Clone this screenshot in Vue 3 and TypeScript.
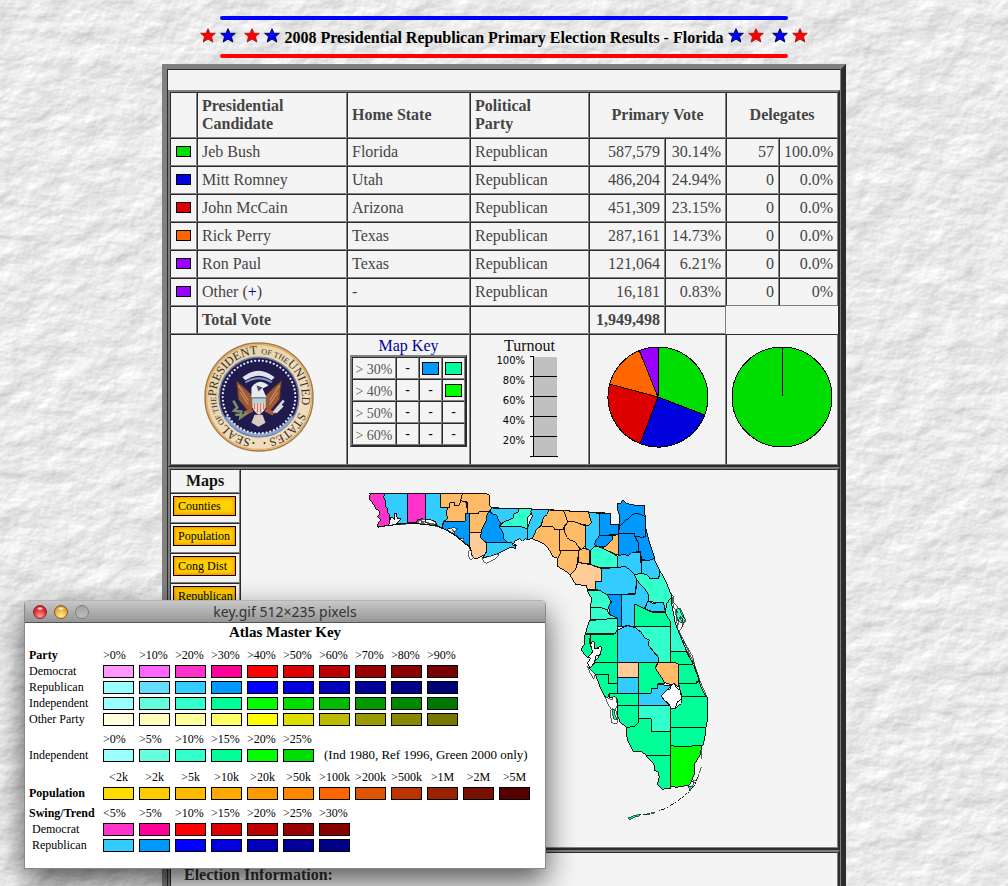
<script setup lang="ts">
interface Candidate {
  name: string
  home: string
  color: string
  votes: string
  pct: string
  delegates: string
  share: string
  more?: boolean
}

interface Region {
  fill: string
  points: string
}

interface KeyRow {
  label: string
  colors: string[]
  note?: string
}

interface KeySection {
  id: string
  title: string
  heads: string[]
  rows: KeyRow[]
}

const candidates: Candidate[] = [
  { name: 'Jeb Bush', home: 'Florida', color: '#00dd00', votes: '587,579', pct: '30.14%', delegates: '57', share: '100.0%' },
  { name: 'Mitt Romney', home: 'Utah', color: '#0000dd', votes: '486,204', pct: '24.94%', delegates: '0', share: '0.0%' },
  { name: 'John McCain', home: 'Arizona', color: '#dd0000', votes: '451,309', pct: '23.15%', delegates: '0', share: '0.0%' },
  { name: 'Rick Perry', home: 'Texas', color: '#ff6600', votes: '287,161', pct: '14.73%', delegates: '0', share: '0.0%' },
  { name: 'Ron Paul', home: 'Texas', color: '#9900ff', votes: '121,064', pct: '6.21%', delegates: '0', share: '0.0%' },
  { name: 'Other', home: '-', color: '#9900ff', votes: '16,181', pct: '0.83%', delegates: '0', share: '0%', more: true },
]

const mapKey: { label: string; cells: string[] }[] = [
  { label: '> 30%', cells: ['', '#0099ff', '#00ff99'] },
  { label: '> 40%', cells: ['', '', '#00ff00'] },
  { label: '> 50%', cells: ['', '', ''] },
  { label: '> 60%', cells: ['', '', ''] },
]

const turnoutMarks = [100, 80, 60, 40, 20]
const mapLinks = ['Counties', 'Population', 'Cong Dist', 'Republican']

const slices = [
  { from: 1, to: 111, color: '#00dd00' },
  { from: 111, to: 201, color: '#0000dd' },
  { from: 201, to: 285, color: '#dd0000' },
  { from: 285, to: 338, color: '#ff6600' },
  { from: 338, to: 361, color: '#9900ff' },
]

function point(angle: number, r: number): string {
  const a = (angle * Math.PI) / 180
  return `${(51 + r * Math.sin(a)).toFixed(2)} ${(51 - r * Math.cos(a)).toFixed(2)}`
}

function slicePath(from: number, to: number): string {
  return `M51 51L${point(from, 50)}A50 50 0 ${to - from > 180 ? 1 : 0} 1 ${point(to, 50)}Z`
}

const beads = Array.from({ length: 60 }, (_, i) => {
  const a = (i * 6 * Math.PI) / 180
  return { x: 54.5 + 36 * Math.sin(a), y: 54.5 - 36 * Math.cos(a) }
})

const pink = '#ff33cc'
const sky = '#33ccff'
const azure = '#0099ff'
const aqua = '#33ffcc'
const mint = '#00ff99'
const amber = '#ffbb66'
const peach = '#ffcc99'

const panhandle: Region[] = [
  { fill: pink, points: '28,48 33,41 75,41 71,51 77,63 75,75 82,86 84,98 89,104 88,130 83,136 68,139 53,142 54,131 62,120 53,111 59,100 56,91 47,86 40,72 28,58' },
  { fill: sky, points: '75,41 142,41 142,130 108,131 118,124 122,116 112,115 108,100 103,102 104,118 92,110 88,130 89,104 84,98 82,86 75,75 77,63 71,51' },
  { fill: pink, points: '142,41 196,41 196,120 185,116 172,122 168,128 142,128' },
  { fill: sky, points: '196,41 241,41 241,82 263,82 260,95 265,118 248,130 248,146 232,138 225,124 214,120 196,120' },
  { fill: amber, points: '241,41 307,41 302,62 298,76 285,78 283,67 270,69 270,82 241,82' },
  { fill: amber, points: '263,82 270,82 270,69 283,67 285,78 298,76 302,62 320,68 322,100 316,100 316,124 250,124 262,118 260,95' },
  { fill: amber, points: '307,41 380,41 388,46 388,75 396,84 388,94 356,96 354,101 322,100 322,66 302,62' },
  { fill: azure, points: '250,124 316,124 316,100 328,100 328,198 318,192 300,176 280,160 265,152 248,146' },
  { fill: amber, points: '328,101 354,101 356,96 388,94 378,108 380,120 370,140 362,157 328,157' },
  { fill: peach, points: '328,157 362,157 367,170 378,186 381,205 376,224 362,230 352,235 341,235 333,218 330,200' },
  { fill: azure, points: '388,94 395,100 410,106 416,122 424,128 418,140 430,160 432,176 442,187 378,187 362,175 364,150 380,120 378,108' },
  { fill: sky, points: '378,187 458,187 458,196 468,195 467,206 456,201 440,207 420,218 400,226 385,230 368,233 380,215' },
  { fill: sky, points: '396,84 476,86 474,96 460,104 460,115 440,122 424,130 416,122 410,106 395,100 390,92' },
  { fill: aqua, points: '476,86 515,86 516,92 510,104 503,114 503,146 480,139 418,139 430,128 440,122 460,115 460,104 474,96' },
  { fill: sky, points: '418,139 480,139 502,146 502,178 495,176 488,184 480,176 465,182 462,190 442,187 432,176 430,160' },
]

const north: Region[] = [
  { fill: sky, points: '35,88 86,90 82,103 70,113 62,138 50,147 37,176 22,178 22,145 32,118 38,108 32,95' },
  { fill: amber, points: '86,89 130,92 136,97 140,112 144,124 132,140 132,148 118,150 103,148 100,140 64,138 70,113 82,103' },
  { fill: amber, points: '64,138 100,140 103,148 118,150 118,210 124,212 116,235 98,230 88,210 76,195 60,186 37,176 50,147' },
  { fill: amber, points: '130,92 206,96 214,128 206,136 190,134 175,130 165,126 148,124 142,124 138,110' },
  { fill: amber, points: '142,128 148,124 165,126 190,136 196,136 196,198 190,204 184,208 172,196 165,186 150,180 140,172 134,155 132,142' },
  { fill: amber, points: '118,150 132,148 134,155 140,172 150,180 165,186 180,208 172,212 118,210' },
  { fill: sky, points: '206,97 238,100 238,168 226,184 228,196 217,212 210,212 196,204 196,136 206,136 214,128' },
  { fill: amber, points: '124,212 176,212 174,230 172,248 166,270 150,286 140,276 112,258 114,235' },
  { fill: amber, points: '176,212 192,204 210,212 210,250 190,250 174,246' },
  { fill: azure, points: '238,100 272,100 272,134 296,134 296,164 238,166' },
  { fill: azure, points: '292,72 302,70 308,60 320,70 345,76 374,78 374,100 376,110 362,103 345,99 328,112 298,140 298,104 292,86' },
  { fill: azure, points: '298,140 328,112 345,99 362,103 376,110 378,150 382,168 366,172 344,168 342,160 296,160' },
  { fill: azure, points: '238,168 280,166 276,180 258,198 238,200 224,196 226,184' },
  { fill: amber, points: '280,166 296,164 296,226 262,212 246,204 258,198 276,180' },
  { fill: aqua, points: '212,210 217,206 226,198 246,204 262,212 292,228 292,272 276,274 274,264 244,264 212,254' },
  { fill: azure, points: '296,160 342,160 344,170 356,190 356,214 335,220 325,228 312,222 296,228' },
  { fill: azure, points: '344,168 366,172 376,170 378,148 386,180 404,235 384,242 364,238 362,218 356,214 354,186' },
  { fill: sky, points: '294,228 312,222 325,228 335,218 362,216 364,280 342,284 328,268 315,262 294,262' },
  { fill: sky, points: '364,240 384,242 402,236 416,265 420,274 416,294 390,296 380,284 366,280' },
  { fill: peach, points: '174,248 190,250 212,254 246,266 246,304 226,306 226,330 202,328 198,316 168,314 150,286 166,270' },
  { fill: sky, points: '246,266 294,262 315,260 328,268 344,284 350,295 346,340 304,344 262,344 240,332 226,326 226,306 246,304' },
  { fill: sky, points: '304,344 346,342 352,296 374,326 386,345 384,362 372,386 344,372 344,440 322,437 304,440' },
  { fill: aqua, points: '344,284 366,280 380,284 390,296 416,296 420,272 440,310 456,350 452,370 440,370 436,400 430,372 400,366 384,362 386,345 374,326 350,300' },
  { fill: aqua, points: '202,332 226,330 240,332 262,344 274,356 268,380 262,390 240,382 212,382 214,354' },
  { fill: aqua, points: '212,382 240,382 262,390 268,404 290,412 290,420 212,420' },
  { fill: azure, points: '262,344 304,344 304,440 292,440 292,414 270,404 266,380 274,366' },
  { fill: mint, points: '344,372 372,386 400,398 436,396 452,415 452,440 344,440' },
  { fill: sky, points: '384,364 400,370 430,366 436,396 400,396 374,386' },
  { fill: aqua, points: '208,422 292,414 292,450 284,462 196,462' },
  { fill: mint, points: '210,464 284,462 292,452 292,547 226,550 215,557 240,525 244,500 225,506 218,520 212,500' },
  { fill: mint, points: '194,464 212,464 208,486 218,514 206,534 194,526 184,508 194,490' },
  { fill: sky, points: '292,450 322,437 344,442 362,456 376,475 388,480 384,494 400,515 414,532 416,547 292,547' },
  { fill: aqua, points: '344,440 452,440 452,547 416,547 414,530 384,494 388,480 376,475 362,456' },
  { fill: aqua, points: '440,370 456,350 456,378 466,430 480,465 500,514 452,514 452,425 436,400' },
  { fill: mint, points: '452,514 500,514 520,552 474,552 452,547' },
]

const south: Region[] = [
  { fill: mint, points: '56,88 76,67 142,67 142,130 115,130 115,103 76,103 64,96' },
  { fill: mint, points: '76,103 115,103 115,130 142,130 142,160 118,160 114,172 104,170 90,140' },
  { fill: peach, points: '142,67 205,67 205,112 142,112' },
  { fill: sky, points: '142,112 205,112 205,160 142,160' },
  { fill: mint, points: '205,67 264,67 256,82 272,105 285,124 285,132 264,132 264,145 244,145 244,160 205,160' },
  { fill: amber, points: '264,67 314,67 326,74 326,140 315,134 305,134 284,128 270,105 256,85' },
  { fill: mint, points: '326,74 370,74 388,122 380,124 380,130 326,130' },
  { fill: mint, points: '326,130 380,130 388,122 392,140 408,169 336,169 330,150' },
  { fill: sky, points: '205,160 244,160 244,145 264,145 264,132 302,138 290,150 274,168 284,184 300,196 205,196' },
  { fill: mint, points: '118,160 205,160 205,196 142,196 142,180 136,170 120,174' },
  { fill: mint, points: '142,196 205,196 205,250 190,262 168,262 150,245 142,225' },
  { fill: aqua, points: '205,196 302,196 302,274 244,274 244,236 205,236' },
  { fill: mint, points: '168,262 192,260 205,250 205,236 244,236 244,274 302,274 302,346 228,346 215,334 190,334 172,300' },
  { fill: mint, points: '302,196 312,208 334,190 336,169 408,169 414,172 414,230 408,262 302,262' },
  { fill: mint, points: '302,262 408,262 404,296 398,318 380,316 352,320 330,320 302,317' },
  { fill: '#00ff00', points: '302,317 330,320 352,320 380,316 396,318 390,345 372,375 374,400 362,428 356,436 318,442 302,438' },
  { fill: mint, points: '228,346 302,346 302,444 276,448 262,434 268,410 264,396 252,390 254,376' },
  { fill: '#ffffff', points: '302,138 312,130 320,144 332,152 334,178 322,186 316,206 304,206 296,190 284,182 274,168 290,150 302,146' },
]

const keySections: KeySection[] = [
  {
    id: 'party',
    title: 'Party',
    heads: ['>0%', '>10%', '>20%', '>30%', '>40%', '>50%', '>60%', '>70%', '>80%', '>90%'],
    rows: [
      { label: 'Democrat', colors: ['#ff99ff', '#ff66ff', '#ff33cc', '#ff0099', '#ff0000', '#dd0000', '#bb0000', '#990000', '#880000', '#770000'] },
      { label: 'Republican', colors: ['#99ffff', '#66ddff', '#33ccff', '#0099ff', '#0000ff', '#0000dd', '#0000bb', '#000099', '#000088', '#000077'] },
      { label: 'Independent', colors: ['#99ffff', '#66ffdd', '#33ffcc', '#00ff99', '#00ff00', '#00dd00', '#00bb00', '#009900', '#008800', '#007700'] },
      { label: 'Other Party', colors: ['#ffffdd', '#ffffbb', '#ffff99', '#ffff66', '#ffff00', '#dddd00', '#bbbb00', '#999900', '#888800', '#777700'] },
    ],
  },
  {
    id: 'minor',
    title: '',
    heads: ['>0%', '>5%', '>10%', '>15%', '>20%', '>25%'],
    rows: [
      { label: 'Independent', colors: ['#99ffff', '#66ffdd', '#33ffcc', '#00ff99', '#00ff00', '#00dd00'], note: '(Ind 1980, Ref 1996, Green 2000 only)' },
    ],
  },
  {
    id: 'population',
    title: '',
    heads: ['<2k', '>2k', '>5k', '>10k', '>20k', '>50k', '>100k', '>200k', '>500k', '>1M', '>2M', '>5M'],
    rows: [
      { label: 'Population', colors: ['#ffdd00', '#ffcc00', '#ffbb00', '#ffaa00', '#ff9900', '#ff8800', '#ff6600', '#dd5500', '#bb3300', '#992200', '#771100', '#550000'] },
    ],
  },
  {
    id: 'swing',
    title: 'Swing/Trend',
    heads: ['<5%', '>5%', '>10%', '>15%', '>20%', '>25%', '>30%'],
    rows: [
      { label: 'Democrat', colors: ['#ff33cc', '#ff0099', '#ff0000', '#dd0000', '#bb0000', '#990000', '#880000'] },
      { label: 'Republican', colors: ['#33ccff', '#0099ff', '#0000ff', '#0000dd', '#0000bb', '#000099', '#000088'] },
    ],
  },
]

const starsLeft = ['red', 'blue', 'red', 'blue']
const starsRight = ['blue', 'red', 'blue', 'red']
</script>

<template>
  <div class="page">
    <svg class="marble" aria-hidden="true">
      <filter id="marble" x="0" y="0" width="100%" height="100%" color-interpolation-filters="sRGB">
        <feTurbulence type="fractalNoise" baseFrequency="0.03 0.04" numOctaves="5" seed="11" />
        <feDiffuseLighting surfaceScale="1" diffuseConstant="1.23" lighting-color="#ffffff">
          <feDistantLight azimuth="235" elevation="48" />
        </feDiffuseLighting>
      </filter>
      <rect width="100%" height="100%" filter="url(#marble)" />
    </svg>

    <main class="content">
      <header class="banner">
        <div class="rule rule-blue"></div>
        <h1>
          <span class="stars">
            <svg v-for="(s, i) in starsLeft" :key="i" class="star" :class="s" viewBox="0 0 16 15">
              <path d="M8 .7L10 5.3H15.3L11.4 8.7L12.8 14L8 11L3.2 14L4.6 8.7L.7 5.3H6Z" />
            </svg>
          </span>
          2008 Presidential Republican Primary Election Results - Florida
          <span class="stars">
            <svg v-for="(s, i) in starsRight" :key="i" class="star" :class="s" viewBox="0 0 16 15">
              <path d="M8 .7L10 5.3H15.3L11.4 8.7L12.8 14L8 11L3.2 14L4.6 8.7L.7 5.3H6Z" />
            </svg>
          </span>
        </h1>
        <div class="rule rule-red"></div>
      </header>

      <div class="frame">
        <div class="frame-inner">
          <table class="results">
            <colgroup>
              <col class="c-swatch" /><col class="c-name" /><col class="c-home" /><col class="c-party" />
              <col class="c-votes" /><col class="c-pct" /><col class="c-del" /><col class="c-share" />
            </colgroup>
            <thead>
              <tr class="head-row">
                <th></th>
                <th>Presidential<br />Candidate</th>
                <th>Home State</th>
                <th>Political<br />Party</th>
                <th colspan="2" class="center">Primary Vote</th>
                <th colspan="2" class="center">Delegates</th>
              </tr>
            </thead>
            <tbody>
              <tr v-for="c in candidates" :key="c.name">
                <td class="chip-cell"><span class="chip" :style="{ background: c.color }"></span></td>
                <td>{{ c.name }}<template v-if="c.more"> (<a href="#other">+</a>)</template></td>
                <td>{{ c.home }}</td>
                <td>Republican</td>
                <td class="num">{{ c.votes }}</td>
                <td class="num">{{ c.pct }}</td>
                <td class="num">{{ c.delegates }}</td>
                <td class="num">{{ c.share }}</td>
              </tr>
              <tr class="total">
                <td></td>
                <td>Total Vote</td>
                <td></td>
                <td></td>
                <td class="num">1,949,498</td>
                <td></td>
                <td colspan="2" class="bare"></td>
              </tr>
              <tr class="charts">
                <td colspan="2" class="seal-cell">
                  <svg class="seal" viewBox="0 0 109 109" role="img" aria-label="Seal of the President of the United States">
                    <defs>
                      <linearGradient id="ring" x1="0" y1="0" x2="1" y2="1">
                        <stop offset="0" stop-color="#e2cfa0" /><stop offset=".5" stop-color="#ecdcb8" /><stop offset="1" stop-color="#f1dcc0" />
                      </linearGradient>
                      <path id="arc" d="M54.5 97A42.5 42.5 0 1 1 54.6 97" />
                    </defs>
                    <circle cx="54.5" cy="54.5" r="53.5" fill="url(#ring)" stroke="#a07c50" stroke-width="1.5" />
                    <circle cx="54.5" cy="54.5" r="52" fill="none" stroke="#e5a95a" stroke-width="1.2" />
                    <circle cx="54.5" cy="54.5" r="39.5" fill="#201b4c" stroke="#6e7dab" stroke-width="1.5" />
                    <path d="M22 74A39 39 0 0 0 88 74" fill="none" stroke="#8ba3cf" stroke-width="3" />
                    <circle v-for="(b, i) in beads" :key="i" :cx="b.x" :cy="b.y" r="1.1" fill="#eef0ff" />
                    <text class="seal-text"><textPath href="#arc" startOffset="8">SEAL</textPath></text>
                    <text class="seal-text small"><textPath href="#arc" startOffset="39">OF THE</textPath></text>
                    <text class="seal-text"><textPath href="#arc" startOffset="67">PRESIDENT</textPath></text>
                    <text class="seal-text small"><textPath href="#arc" startOffset="135">OF THE</textPath></text>
                    <text class="seal-text"><textPath href="#arc" startOffset="163">UNITED</textPath></text>
                    <text class="seal-text"><textPath href="#arc" startOffset="215">STATES</textPath></text>
                    <circle cx="49" cy="100" r="1" fill="#3b2b2b" />
                    <circle cx="60" cy="100" r="1" fill="#3b2b2b" />
                    <path d="M38 35Q54 22 70 35L67 38Q54 29 41 38Z" fill="#dfe3ef" />
                    <path d="M41 40Q54 32 67 40" fill="none" stroke="#8296be" stroke-width="2" />
                    <path d="M32 38L41 46L48 53L50 64L43 68L34 57Z" fill="#9a5a38" stroke="#442833" />
                    <path d="M77 38L68 46L61 53L59 64L66 68L75 57Z" fill="#9a5a38" stroke="#442833" />
                    <path d="M34 43L44 58M36 50L44 62M75 43L65 58M73 50L65 62" stroke="#d59a66" fill="none" />
                    <path d="M47 45Q54 35 64 43L58 46L62 55H47Z" fill="#e8eaf2" />
                    <path d="M52 43L58 45L54 49Z" fill="#4e4660" />
                    <path d="M48 56H61V65Q59 70 54.5 72Q50 70 48 65Z" fill="#f5e8df" />
                    <path d="M50 60V67M53 60V70M56 60V70M59 60V67" stroke="#d77868" stroke-width="1.5" />
                    <path d="M48 56H61V60H48Z" fill="#a6d4dc" />
                    <path d="M48 67L40 71M61 67L69 71" stroke="#a65d3c" stroke-width="4" />
                    <path d="M50 72L47 80L54 84L61 80L58 72Z" fill="#d8cbc4" />
                    <path d="M29 58L33 65L30 68L37 69L36 75L43 70M31 72L38 72" fill="none" stroke="#7d8d66" stroke-width="2.5" />
                    <path d="M69 70L79 58M71 70L78 63" stroke="#d9d7dd" stroke-width="2.5" />
                  </svg>
                </td>
                <td>
                  <div class="key-title">Map Key</div>
                  <table class="map-key">
                    <tbody>
                      <tr v-for="row in mapKey" :key="row.label">
                        <th scope="row">{{ row.label }}</th>
                        <td v-for="(cell, i) in row.cells" :key="i">
                          <span v-if="cell" class="key-chip" :style="{ background: cell }"></span>
                          <template v-else>-</template>
                        </td>
                      </tr>
                    </tbody>
                  </table>
                </td>
                <td>
                  <div class="turnout-title">Turnout</div>
                  <svg class="turnout" viewBox="-10 0 84 106" role="img" aria-label="Turnout scale">
                    <rect x="36" y="2" width="23" height="100" fill="#c0c0c0" />
                    <path d="M35.5 1V102M32 1.5H36M32 101.5H60M32 21.5H59M32 41.5H59M32 61.5H59M32 81.5H59" stroke="#000" fill="none" />
                    <text v-for="(m, i) in turnoutMarks" :key="m" x="27" :y="9 + i * 20" text-anchor="end">{{ m }}%</text>
                  </svg>
                </td>
                <td colspan="2" class="pie-cell">
                  <svg class="pie" viewBox="0 0 102 102" role="img" aria-label="Primary vote by candidate">
                    <path v-for="s in slices" :key="s.color" :d="slicePath(s.from, s.to)" :fill="s.color" />
                  </svg>
                </td>
                <td colspan="2" class="pie-cell">
                  <svg class="pie" viewBox="0 0 102 102" role="img" aria-label="Delegates by candidate">
                    <circle cx="51" cy="51" r="50" fill="#00dd00" />
                    <path d="M51 51L52 1" />
                  </svg>
                </td>
              </tr>
            </tbody>
          </table>

          <section class="maps">
            <nav class="map-links">
              <h2>Maps</h2>
              <div v-for="m in mapLinks" :key="m" class="map-link">
                <button type="button">{{ m }}</button>
              </div>
              <div class="map-rest"></div>
            </nav>
            <div class="map-cell">
              <svg class="florida" viewBox="241 470 596 377" role="img" aria-label="Florida counties">
                <g transform="translate(360 480) scale(.33333)">
                  <polygon v-for="(r, i) in panhandle" :key="i" :points="r.points" :fill="r.fill" />
                  <path class="thin" fill="#fff" d="M68 139L95 135L140 132L170 128L230 139L225 133L185 124L172 118L176 124L166 128L140 130L90 136ZM184 119L196 118V130L185 128ZM196 120L214 120L226 126L228 135L200 130Z" />
                  <path class="thin" fill="#fff" d="M262 148L278 143L292 145L285 154L276 149L284 160L274 158ZM298 176L312 175L310 184L302 180ZM327 213L335 211L333 221L340 234L332 240L326 228ZM366 236L388 229L415 222L415 228L405 237L390 244L380 250L371 245Z" />
                  <path fill="none" d="M28 41H380" />
                  <path fill="none" d="M53 141L90 136L148 129L230 137L262 152L290 170L326 200L333 214M396 83L480 87M458 190L469 196L466 206" />
                </g>
                <g transform="translate(520 480) scale(.33333)">
                  <polygon v-for="(r, i) in north" :key="i" :points="r.points" :fill="r.fill" />
                  <path fill="#fff" d="M212 494L218 482L224 490L222 506L236 506L238 498L244 502L242 524L228 528L224 546L210 566L202 548L212 536L204 530L218 516Z" />
                  <path class="thin" :fill="aqua" d="M468 388L480 384L496 418L490 428L482 408L484 430L472 420Z" />
                  <path class="thin" fill="none" d="M448 335L462 350L460 366L482 392L484 404L498 420L490 434L478 454L492 485L520 546L536 592M456 350L460 380L474 398M466 390L474 450L490 490L518 550M478 410L474 436M490 404L486 442" />
                  <path d="M18 86L70 89L206 96L272 100" fill="none" />
                </g>
                <g transform="translate(570 640) scale(.33333)">
                  <polygon points="302,34 348,34 360,55 370,73 326,74 314,67 302,67" :fill="mint" />
                  <polygon v-for="(r, i) in south" :key="i" :points="r.points" :fill="r.fill" />
                  <path fill="#fff" class="thin" d="M52 78L64 92L76 103L71 118L58 94ZM104 170L126 180L130 170L138 172L142 196L136 206L144 238L140 252L126 248L120 220L124 208L116 195Z" />
                  <path :fill="mint" class="thin" d="M126 206L134 210L134 224L142 240L130 236ZM354 438L368 440L360 452Z" />
                  <path class="thin" fill="none" d="M340 0L368 50L378 88L392 128L410 168M396 320L396 358M394 382L388 398M386 402L382 418L366 424L378 430M372 422L368 438" />
                  <path fill="none" stroke-dasharray="14 5 5 4" d="M384 410L372 438L352 460L320 486L292 502L268 513" />
                  <path :fill="mint" class="thin" d="M174 534L190 528L214 522L208 528L192 532L178 540ZM220 524L240 520L236 525ZM244 519L256 516L250 521Z" />
                </g>
              </svg>
            </div>
          </section>

          <section class="info">
            <div class="info-cell"><h2>Election Information:</h2></div>
          </section>
        </div>
      </div>
    </main>

    <aside class="window" aria-label="key.gif">
      <div class="titlebar">
        <div class="lights">
          <button type="button" class="light close" aria-label="Close"></button>
          <button type="button" class="light mini" aria-label="Minimize"></button>
          <button type="button" class="light zoom" aria-label="Zoom" disabled></button>
        </div>
        <span class="window-title">key.gif 512×235 pixels</span>
      </div>
      <div class="window-body">
        <h2>Atlas Master Key</h2>
        <table v-for="s in keySections" :key="s.id" class="legend" :class="s.id">
          <thead>
            <tr>
              <th>{{ s.title }}</th>
              <td v-for="h in s.heads" :key="h">{{ h }}</td>
            </tr>
          </thead>
          <tbody>
            <tr v-for="r in s.rows" :key="r.label">
              <th scope="row">{{ r.label }}</th>
              <td v-for="c in r.colors" :key="c"><span class="bar" :style="{ background: c }"></span></td>
              <td v-if="r.note" class="note">{{ r.note }}</td>
            </tr>
          </tbody>
        </table>
      </div>
    </aside>
  </div>
</template>

<style>
body {
  margin: 0;
  background: #e8e8e8;
}
</style>

<style scoped>
.page {
  position: relative;
  height: 100vh;
  overflow: hidden;
  font: 16px/18px "Liberation Serif", serif;
  color: #444;
}
.marble {
  position: absolute;
  inset: 0;
  width: 100%;
  height: 100%;
}
.content {
  position: relative;
  width: min(100%, 684px);
  margin: 0 auto;
}
.banner {
  display: flex;
  flex-direction: column;
  align-items: center;
  padding: 16px 0 6px;
}
.rule {
  width: 83%;
  height: 4px;
  border-radius: 2px;
}
.rule-blue { background: #00f; }
.rule-red { background: #f00; }
h1 {
  display: flex;
  align-items: center;
  gap: 4px;
  box-sizing: border-box;
  height: 34px;
  margin: 0;
  padding-top: 2px;
  font-size: 16px;
  color: #000;
  white-space: nowrap;
}
.stars {
  display: flex;
  gap: 4px;
  padding-bottom: 6px;
}
.star {
  width: 16px;
  height: 15px;
}
.star:nth-child(3) { margin-left: 4px; }
.star.red { fill: #f00; stroke: #b01818; }
.star.blue { fill: #00f; stroke: #000060; }

.frame {
  border: 5px solid;
  border-color: #808080 #2c2c2c #2c2c2c #808080;
}
.frame-inner {
  border: 1px solid;
  border-color: #2c2c2c #808080 #808080 #2c2c2c;
  padding-top: 20px;
  background: #f4f4f4;
}
.results,
.maps,
.info {
  box-sizing: border-box;
  width: 100%;
  border: 2px solid;
  border-color: #808080 #2c2c2c #2c2c2c #808080;
}
.results {
  border-collapse: separate;
  border-spacing: 0;
  table-layout: fixed;
}
.c-swatch { width: 27px; }
.c-name { width: 150px; }
.c-home { width: 123px; }
.c-party { width: 119px; }
.c-votes { width: 76px; }
.c-pct { width: 61px; }
.c-del { width: 53px; }
.c-share { width: 59px; }
.results th,
.results td {
  box-sizing: border-box;
  height: 28px;
  padding: 0 4px;
  border: 1px solid;
  border-color: #2c2c2c #808080 #808080 #2c2c2c;
  text-align: left;
  white-space: nowrap;
}
.results .head-row th { height: 46px; }
.results .center { text-align: center; }
.results .num { text-align: right; }
.results .chip-cell { padding: 0 5px 2px; }
.chip {
  display: block;
  box-sizing: border-box;
  width: 15px;
  height: 11px;
  border: 1px solid #000;
}
a {
  color: #00009c;
  text-decoration: none;
}
.total { font-weight: bold; }
.results .bare { border-color: transparent; }
.results .charts > td {
  height: 131px;
  padding: 2px 2px 0;
  vertical-align: top;
}
.results .charts .seal-cell { padding-top: 7px; }
.seal {
  display: block;
  width: 110px;
  height: 110px;
  margin: 0 auto;
}
.seal-text {
  font: 12px "Liberation Serif", serif;
  fill: #3b2b2b;
}
.seal-text.small { font-size: 8px; }
.key-title {
  color: #00009c;
  text-align: center;
}
.map-key {
  width: 117px;
  border: 2px solid;
  border-color: #808080 #2c2c2c #2c2c2c #808080;
  border-spacing: 0;
  table-layout: fixed;
}
.results .map-key th,
.results .map-key td {
  height: 22px;
  padding: 0;
  text-align: center;
  line-height: 16px;
}
.results .map-key th {
  width: 44px;
  padding-top: 4px;
  font-size: 14px;
  font-weight: normal;
  color: #555;
}
.results .map-key td {
  color: #000;
  font: 14px/16px "Liberation Sans", sans-serif;
}
.key-chip {
  display: block;
  box-sizing: border-box;
  width: 17px;
  height: 13px;
  margin: 0 auto;
  border: 1px solid #000;
}
.turnout-title {
  text-align: center;
  color: #111;
}
.turnout {
  display: block;
  width: 84px;
  height: 106px;
  margin: 0 15px;
  shape-rendering: crispEdges;
}
.turnout text {
  font: 10px "DejaVu Sans", sans-serif;
  fill: #000;
}
.results .charts .pie-cell { padding-top: 11px; }
.pie {
  display: block;
  width: 102px;
  height: 102px;
  margin: 0 auto;
  stroke: #000;
  shape-rendering: crispEdges;
}

.maps {
  display: flex;
  height: 383px;
}
.map-links {
  display: flex;
  flex-direction: column;
  width: 70px;
  flex: none;
}
.map-links h2,
.map-link,
.map-rest,
.map-cell,
.info-cell {
  box-sizing: border-box;
  border: 1px solid;
  border-color: #2c2c2c #808080 #808080 #2c2c2c;
}
.map-links h2 {
  height: 24px;
  margin: 0;
  padding-top: 1px;
  font-size: 16px;
  line-height: 19px;
  text-align: center;
  color: #111;
}
.map-link {
  height: 30px;
  padding: 2px;
}
.map-link button {
  display: block;
  width: 63px;
  height: 20px;
  padding: 0 4px;
  border: 1px solid #000;
  background: #ffd100;
  box-shadow: inset 0 0 0 1px #ff9900, inset 0 0 3px 2px #ffa200;
  font: 12px/16px "Liberation Serif", serif;
  text-align: left;
  color: #000;
}
.map-rest { flex: 1; }
.map-cell {
  flex: 1;
  min-width: 0;
}
.florida {
  display: block;
  width: 100%;
  shape-rendering: crispEdges;
  stroke: #111;
  stroke-width: 3;
}
.thin { stroke-width: 2; }
.info-cell { padding: 13px 13px 40px; }
.info h2 {
  margin: 0;
  font-size: 16px;
  line-height: 18px;
  color: #333;
}

.window {
  position: absolute;
  left: 24px;
  top: 600px;
  width: 520px;
  border: 1px solid #888;
  border-top-color: #b4b4b4;
  border-radius: 5px 5px 0 0;
  background: #fff;
  box-shadow: 0 12px 30px rgba(0, 0, 0, 0.65);
  color: #000;
  box-sizing: content-box;
}
.titlebar {
  display: grid;
  grid-template-columns: 1fr auto 1fr;
  align-items: center;
  height: 21px;
  border-bottom: 1px solid #555;
  border-radius: 4px 4px 0 0;
  background: linear-gradient(#c8c8c8, #969696);
}
.lights {
  display: flex;
  gap: 7px;
  padding-left: 8px;
}
.light {
  width: 14px;
  height: 14px;
  padding: 0;
  border: 1px solid #555;
  border-radius: 50%;
}
.close { border-color: #7a2a28; background: radial-gradient(ellipse 4px 2px at 50% 22%, #fff, transparent), radial-gradient(circle at 50% 85%, #ff9b94, #e0242c 60%, #a81c20); }
.mini { border-color: #8a5a20; background: radial-gradient(ellipse 4px 2px at 50% 22%, #fff, transparent), radial-gradient(circle at 50% 85%, #fff08a, #f2a93c 60%, #b86f20); }
.zoom { border-color: #808080; background: linear-gradient(#a2a2a2, #bdbdbd); }
.window-title {
  font: 14px/20px "Noto Sans", sans-serif;
  color: #333;
}
.window-body { padding-bottom: 15px; }
.window-body h2 {
  margin: 0 0 5px;
  font-size: 15px;
  line-height: 19px;
  text-align: center;
}
.legend {
  border-spacing: 0;
  font-size: 12px;
  line-height: 14px;
}
.minor,
.swing { margin-top: 4px; }
.population { margin-top: 6px; }
.legend th,
.legend td {
  box-sizing: border-box;
  width: 36px;
  min-width: 36px;
  max-width: 36px;
  height: 16px;
  padding: 0;
  font-weight: normal;
  text-align: left;
  white-space: nowrap;
}
.legend th {
  width: 78px;
  min-width: 78px;
  max-width: 78px;
  padding-left: 4px;
}
.legend thead th,
.population tbody th { font-weight: bold; }
.swing tbody th { padding-left: 7px; }
.population thead td {
  padding-right: 5px;
  text-align: center;
}
.legend .note {
  padding-left: 5px;
  font-size: 13px;
}
.bar {
  display: block;
  box-sizing: border-box;
  width: 31px;
  height: 13px;
  border: 1px solid #000;
}
</style>
